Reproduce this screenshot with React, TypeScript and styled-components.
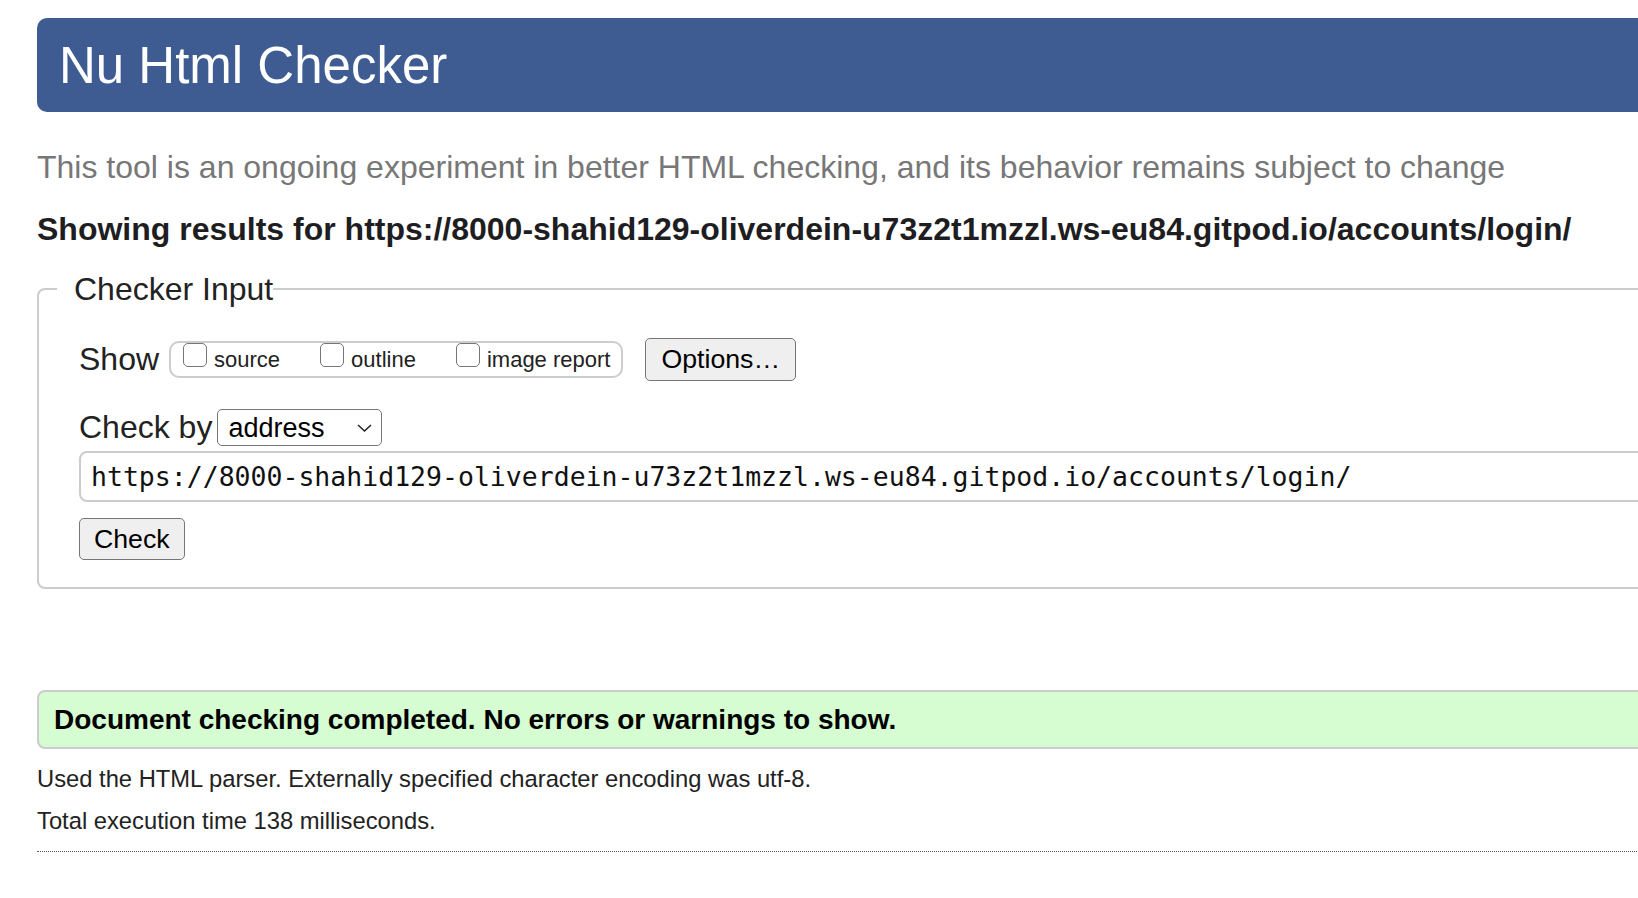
import React from "react";
import styled, { createGlobalStyle } from "styled-components";

const GlobalStyle = createGlobalStyle`
  html, body {
    margin: 0;
    padding: 0;
    overflow: hidden;
    background: #fff;
  }
  body {
    font-family: "Liberation Sans", Arial, Helvetica, sans-serif;
    color: #222;
  }
`;

const Page = styled.div`
  width: 1760px;
  padding: 18px 0 40px 37px;
`;

const Header = styled.header`
  height: 94px;
  display: flex;
  align-items: center;
  padding-left: 22px;
  background: #3e5c91;
  border-radius: 10px;
`;

const Title = styled.h1`
  margin: 0;
  font-size: 51px;
  font-weight: normal;
  color: #fff;
`;

const Intro = styled.p`
  margin: 38px 0 0;
  font-size: 32px;
  line-height: 34px;
  color: #777;
`;

const Results = styled.h2`
  margin: 28px 0 0;
  font-size: 32px;
  line-height: 34px;
  font-weight: bold;
  color: #1e1e22;
`;

const Fieldset = styled.fieldset`
  margin: 25px 0 0;
  border: 2px solid #ccc;
  border-radius: 8px;
  padding: 31px 0 27px 18px;
`;

const Legend = styled.legend`
  font-size: 32px;
  line-height: 36px;
  padding: 0 0 0 17px;
`;

const Inner = styled.div`
  padding-left: 22px;
`;

const Row = styled.div<{ $gap?: number }>`
  display: flex;
  align-items: center;
  margin-top: ${(p) => p.$gap ?? 0}px;
`;

const Label = styled.span`
  font-size: 32px;
`;

const Group = styled.div`
  display: flex;
  align-items: center;
  gap: 40px;
  box-sizing: border-box;
  height: 37px;
  margin-left: 10px;
  padding: 0 11px 0 12px;
  border: 2px solid #ccc;
  border-radius: 10px;
`;

const CheckLabel = styled.label`
  display: inline-flex;
  align-items: center;
  gap: 7px;
  font-size: 22px;
  color: #222;
`;

const Box = styled.input`
  appearance: none;
  margin: 0 0 10px;
  width: 24px;
  height: 24px;
  box-sizing: border-box;
  border: 1.5px solid #767676;
  border-radius: 5px;
  background: #fff;
`;

const Button = styled.button`
  box-sizing: border-box;
  height: 43px;
  padding: 0 15px;
  font-family: "Liberation Sans", Arial, sans-serif;
  font-size: 26.7px;
  color: #000;
  background: #efefef;
  border: 1.5px solid #767676;
  border-radius: 5px;
`;

const OptionsButton = styled(Button)`
  margin-left: 22px;
`;

const SelectWrap = styled.div`
  position: relative;
  margin-left: 5px;
`;

const Select = styled.select`
  appearance: none;
  box-sizing: border-box;
  width: 165px;
  height: 37px;
  padding: 0 0 0 10px;
  font-family: "Liberation Sans", Arial, sans-serif;
  font-size: 27px;
  color: #000;
  background: #fff;
  border: 1.5px solid #767676;
  border-radius: 5px;
`;

const Chevron = styled.svg`
  position: absolute;
  right: 10px;
  top: 15px;
  pointer-events: none;
`;

const UrlInput = styled.input`
  display: block;
  box-sizing: border-box;
  width: 100%;
  height: 51px;
  margin-top: 5px;
  padding: 0 0 0 10px;
  font-family: "DejaVu Sans Mono", "Liberation Mono", monospace;
  font-size: 26.5px;
  color: #111;
  border: 2px solid #ccc;
  border-radius: 8px;
`;

const CheckButton = styled(Button)`
  display: block;
  height: 42px;
  margin-top: 16px;
  padding: 0 14px;
`;

const Success = styled.div`
  box-sizing: border-box;
  height: 59px;
  margin-top: 101px;
  display: flex;
  align-items: center;
  padding-left: 15px;
  font-size: 28px;
  font-weight: bold;
  color: #000;
  background: #d6fcd1;
  border: 2px solid #ccc;
  border-radius: 8px;
`;

const Note = styled.p<{ $gap: number }>`
  margin: ${(p) => p.$gap}px 0 0;
  font-size: 23.75px;
  line-height: 28px;
  color: #222;
`;

const Rule = styled.hr`
  margin: 16px 0 0;
  border: 0;
  border-top: 1px dotted #555;
`;

const url = "https://8000-shahid129-oliverdein-u73z2t1mzzl.ws-eu84.gitpod.io/accounts/login/";

const App = () => {
  return (
    <>
      <GlobalStyle />
      <Page>
        <Header>
          <Title>Nu Html Checker</Title>
        </Header>
        <Intro>
          This tool is an ongoing experiment in better HTML checking, and its behavior remains subject to change
        </Intro>
        <Results>Showing results for {url}</Results>
        <Fieldset>
          <Legend>Checker Input</Legend>
          <Inner>
            <Row>
              <Label>Show</Label>
              <Group>
                <CheckLabel>
                  <Box type="checkbox" />
                  source
                </CheckLabel>
                <CheckLabel>
                  <Box type="checkbox" />
                  outline
                </CheckLabel>
                <CheckLabel>
                  <Box type="checkbox" />
                  image report
                </CheckLabel>
              </Group>
              <OptionsButton type="button">Options…</OptionsButton>
            </Row>
            <Row $gap={28}>
              <Label>Check by</Label>
              <SelectWrap>
                <Select defaultValue="address">
                  <option value="address">address</option>
                  <option value="file">file upload</option>
                  <option value="text">text input</option>
                </Select>
                <Chevron width="15" height="8" viewBox="0 0 15 8">
                  <path d="M1 1 L7.5 7 L14 1" fill="none" stroke="#222" strokeWidth="1.5" />
                </Chevron>
              </SelectWrap>
            </Row>
            <UrlInput type="url" defaultValue={url} />
            <CheckButton type="button">Check</CheckButton>
          </Inner>
        </Fieldset>
        <Success>Document checking completed. No errors or warnings to show.</Success>
        <Note $gap={16}>Used the HTML parser. Externally specified character encoding was utf-8.</Note>
        <Note $gap={14}>Total execution time 138 milliseconds.</Note>
        <Rule />
      </Page>
    </>
  );
};

export default App;
